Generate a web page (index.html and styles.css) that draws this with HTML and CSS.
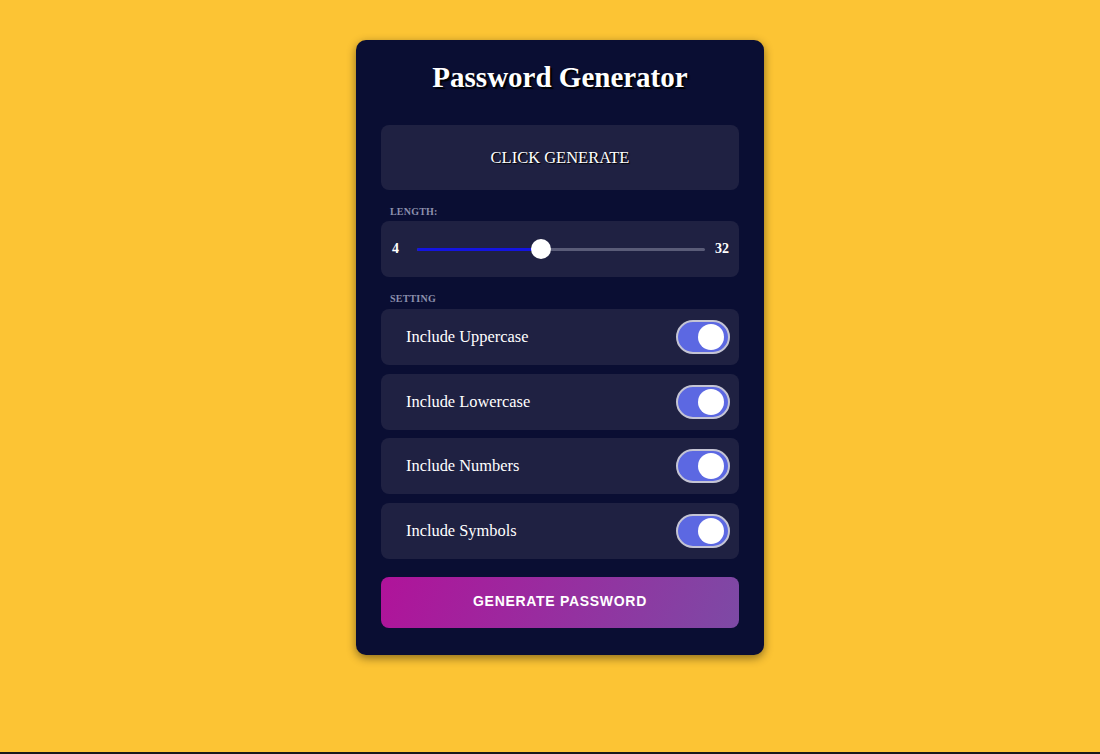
FILE: index.html
```html
<!DOCTYPE html>
<html>
<head>
<meta charset="utf-8">
<link rel="stylesheet" href="styles.css">
</head>
<body>
<div class="page">
  <div class="card">
    <h1 class="title">Password Generator</h1>
    <div class="result">CLICK GENERATE</div>
    <div class="label">LENGTH:</div>
    <div class="panel length">
      <span class="num">4</span>
      <div class="slider">
        <div class="track"></div>
        <div class="fill"></div>
        <div class="thumb"></div>
      </div>
      <span class="num">32</span>
    </div>
    <div class="label">SETTING</div>
    <div class="settings">
      <div class="panel setting"><span>Include Uppercase</span><span class="toggle"><span class="knob"></span></span></div>
      <div class="panel setting"><span>Include Lowercase</span><span class="toggle"><span class="knob"></span></span></div>
      <div class="panel setting"><span>Include Numbers</span><span class="toggle"><span class="knob"></span></span></div>
      <div class="panel setting"><span>Include Symbols</span><span class="toggle"><span class="knob"></span></span></div>
    </div>
    <button class="generate">GENERATE PASSWORD</button>
  </div>
</div>
</body>
</html>
```

FILE: styles.css
```css
html, body {
  margin: 0;
  padding: 0;
}
body {
  background: #fcc434;
  font-family: "Liberation Serif", "Times New Roman", serif;
  color: #fff;
}
.page {
  height: 752px;
  border-bottom: 2px solid #1a1a1a;
  display: flex;
  justify-content: center;
  align-items: flex-start;
  padding-left: 20px;
  box-sizing: content-box;
}
.card {
  margin-top: 40px;
  width: 408px;
  box-sizing: border-box;
  background: #0a0e33;
  border-radius: 10px;
  padding: 18px 25px 27px;
  box-shadow: 0 3px 10px rgba(0, 0, 0, 0.45);
}
.title {
  margin: 0;
  text-align: center;
  font-size: 29px;
  font-weight: bold;
  line-height: 38px;
  text-shadow: 2px 2px 1px #000;
}
.result {
  margin-top: 29px;
  height: 65px;
  border-radius: 8px;
  background: #1f2142;
  display: flex;
  align-items: center;
  justify-content: center;
  font-size: 16.5px;
  text-shadow: 1px 1px 1px #000;
}
.label {
  margin: 15px 0 0 9px;
  font-size: 10px;
  font-weight: bold;
  line-height: 14px;
  color: #8d90ad;
  letter-spacing: 0.2px;
}
.panel {
  background: #1f2142;
  border-radius: 8px;
}
.length {
  margin-top: 2px;
  height: 56px;
  display: flex;
  align-items: center;
  padding: 0 10px 0 11px;
}
.num {
  font-weight: bold;
  font-size: 14px;
}
.slider {
  position: relative;
  flex: 1;
  height: 20px;
  margin: 0 10px 0 18px;
}
.track {
  position: absolute;
  left: 0;
  right: 0;
  top: 9px;
  height: 3px;
  background: #5a5c78;
  border-radius: 2px;
}
.fill {
  position: absolute;
  left: 0;
  width: 124px;
  top: 9px;
  height: 3px;
  background: #1414e0;
  border-radius: 2px;
}
.thumb {
  position: absolute;
  left: 114px;
  top: 0;
  width: 20px;
  height: 20px;
  border-radius: 50%;
  background: #fff;
}
.settings {
  margin-top: 3px;
  display: flex;
  flex-direction: column;
  gap: 8.5px;
}
.setting {
  height: 56px;
  display: flex;
  align-items: center;
  justify-content: space-between;
  padding: 0 9px 0 25px;
  font-size: 16.4px;
}
.toggle {
  width: 54px;
  height: 34px;
  box-sizing: border-box;
  border-radius: 17px;
  border: 2px solid #c4c4d4;
  background: #5c68e2;
  display: flex;
  align-items: center;
  justify-content: flex-end;
  padding-right: 4px;
}
.knob {
  width: 26px;
  height: 26px;
  border-radius: 50%;
  background: #fff;
}
.generate {
  margin-top: 18px;
  width: 100%;
  height: 51px;
  border: none;
  border-radius: 8px;
  background: linear-gradient(110deg, #b0139a 0%, #7d4aa5 100%);
  color: #fff;
  font-family: "Liberation Sans", Arial, sans-serif;
  font-weight: bold;
  font-size: 14px;
  letter-spacing: 0.7px;
  padding: 0 0 2px;
  display: block;
}
```
